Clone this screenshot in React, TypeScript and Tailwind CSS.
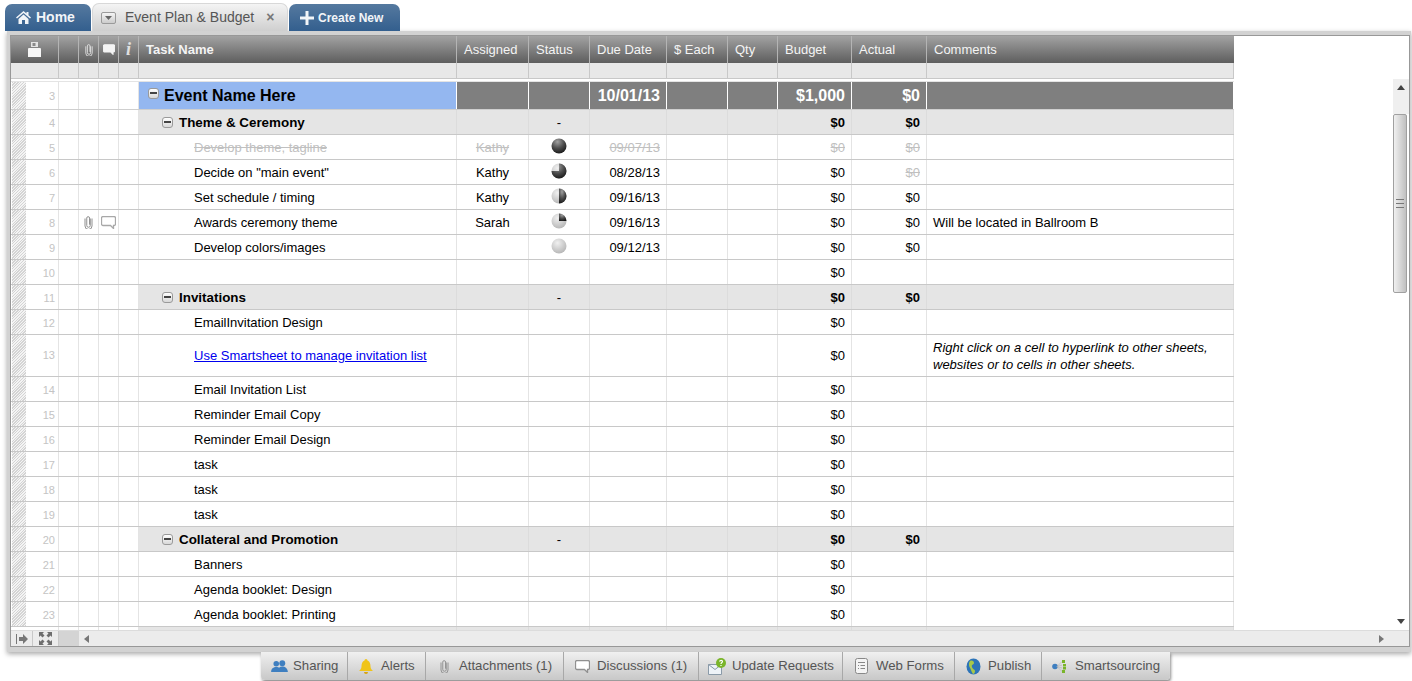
import React from "react";

const cols = "grid grid-cols-[48px_20px_20px_20px_20px_318px_72px_61px_77px_61px_50px_74px_75px_307px]";

const Clip = ({ c = "#8a8a8a", w = 9, h = 14 }: { c?: string; w?: number; h?: number }) => (
  <svg width={w} height={h} viewBox="0 0 10 16" fill="none">
    <path d="M7 4v8a2 2 0 0 1-4 0V3.5a1.6 1.6 0 0 1 3.200 0V11" stroke={c} strokeWidth="1.100" />
    <path d="M9 4v8.500a4 4 0 0 1-8 0V4" stroke={c} strokeWidth="1.100" />
  </svg>
);

const Bubble = ({ stroke = "#a8a8a8", fill = "#fff", w = 15, h = 13 }: { stroke?: string; fill?: string; w?: number; h?: number }) => (
  <svg width={w} height={h} viewBox="0 0 15 13">
    <path d="M2 .5h11a1.500 1.500 0 0 1 1.500 1.500v6a1.500 1.500 0 0 1-1.500 1.500h-.5V12.500L9.500 9.500H2A1.500 1.500 0 0 1 .5 8V2A1.500 1.500 0 0 1 2 .5z" fill={fill} stroke={stroke} strokeWidth="1.300" />
  </svg>
);

const Ball = ({ id, level }: { id: string; level: number }) => {
  const r = 7.5;
  let wedge = "";
  if (level === 3) wedge = "M8 8V.5A7.500 7.500 0 1 1 .5 8z";
  if (level === 2) wedge = "M8 .5A7.500 7.500 0 0 1 8 15.500z";
  if (level === 1) wedge = "M8 8V.5A7.500 7.500 0 0 1 15.500 8z";
  return (
    <svg width="16" height="16" viewBox="0 0 16 16">
      <defs>
        <radialGradient id={id + "l"} cx="40%" cy="30%" r="75%">
          <stop offset="0%" stopColor="#f0f0f0" />
          <stop offset="100%" stopColor="#b4b4b4" />
        </radialGradient>
        <radialGradient id={id + "d"} cx="40%" cy="22%" r="80%">
          <stop offset="0%" stopColor="#a0a0a0" />
          <stop offset="55%" stopColor="#4c4c4c" />
          <stop offset="100%" stopColor="#1a1a1a" />
        </radialGradient>
      </defs>
      <circle cx="8" cy="8" r={r} fill={level === 4 ? `url(#${id}d)` : `url(#${id}l)`} />
      {wedge && <path d={wedge} fill={`url(#${id}d)`} />}
    </svg>
  );
};

const Toggle = ({ cls = "" }: { cls?: string }) => (
  <span className={`flex h-[11px] w-[11px] shrink-0 items-center justify-center rounded-[3px] border border-[#9a9a9a] bg-gradient-to-b from-[#ffffff] to-[#d8d8d8] ${cls}`}>
    <span className="h-[2px] w-[7px] bg-[#444444]" />
  </span>
);

type R = {
  n: number;
  k: "top" | "group" | "task";
  name?: string;
  who?: string;
  ball?: number;
  dash?: boolean;
  date?: string;
  budget?: string;
  actual?: string;
  note?: string;
  done?: boolean;
  actualDone?: boolean;
  icons?: boolean;
  link?: boolean;
  tall?: boolean;
};

const rows: R[] = [
  { n: 3, k: "top", name: "Event Name Here", date: "10/01/13", budget: "$1,000", actual: "$0" },
  { n: 4, k: "group", name: "Theme & Ceremony", dash: true, budget: "$0", actual: "$0" },
  { n: 5, k: "task", name: "Develop theme, tagline", who: "Kathy", ball: 4, date: "09/07/13", budget: "$0", actual: "$0", done: true },
  { n: 6, k: "task", name: 'Decide on "main event"', who: "Kathy", ball: 3, date: "08/28/13", budget: "$0", actual: "$0", actualDone: true },
  { n: 7, k: "task", name: "Set schedule / timing", who: "Kathy", ball: 2, date: "09/16/13", budget: "$0", actual: "$0" },
  { n: 8, k: "task", name: "Awards ceremony theme", who: "Sarah", ball: 1, date: "09/16/13", budget: "$0", actual: "$0", note: "Will be located in Ballroom B", icons: true },
  { n: 9, k: "task", name: "Develop colors/images", ball: 0, date: "09/12/13", budget: "$0", actual: "$0" },
  { n: 10, k: "task", budget: "$0" },
  { n: 11, k: "group", name: "Invitations", dash: true, budget: "$0", actual: "$0" },
  { n: 12, k: "task", name: "EmailInvitation Design", budget: "$0" },
  { n: 13, k: "task", name: "Use Smartsheet to manage invitation list", budget: "$0", link: true, tall: true, note: "Right click on a cell to hyperlink to other sheets, websites or to cells in other sheets." },
  { n: 14, k: "task", name: "Email Invitation List", budget: "$0" },
  { n: 15, k: "task", name: "Reminder Email Copy", budget: "$0" },
  { n: 16, k: "task", name: "Reminder Email Design", budget: "$0" },
  { n: 17, k: "task", name: "task", budget: "$0" },
  { n: 18, k: "task", name: "task", budget: "$0" },
  { n: 19, k: "task", name: "task", budget: "$0" },
  { n: 20, k: "group", name: "Collateral and Promotion", dash: true, budget: "$0", actual: "$0" },
  { n: 21, k: "task", name: "Banners", budget: "$0" },
  { n: 22, k: "task", name: "Agenda booklet: Design", budget: "$0" },
  { n: 23, k: "task", name: "Agenda booklet: Printing", budget: "$0" },
];

const Hatch = ({ n, pad }: { n?: number; pad?: boolean }) => (
  <div className="flex h-full items-center justify-end border-r border-[#e4e4e4] pr-[3px] text-[11px] text-[#c4c4c4]">
    <span className="ml-[1px] mr-auto h-full w-[14px] bg-[repeating-linear-gradient(135deg,#d4d4d4_0px,#d4d4d4_1px,#f4f4f4_1px,#f4f4f4_2px)]" />
    <span className={pad ? "pt-[2px]" : ""}>{n}</span>
  </div>
);

const Row = ({ r }: { r: R }) => {
  const h = r.k === "top" ? "h-[28px]" : r.tall ? "h-[42px]" : "h-[25px]";
  const base = "h-full flex items-center border-r min-w-0";
  if (r.k === "top") {
    const c = `${base} border-[#ffffff] bg-[#7f7f7f] text-white font-bold text-[16px] justify-end pr-[6px]`;
    return (
      <div className={`${cols} ${h} items-stretch border-b border-[#cfcfcf]`}>
        <Hatch n={r.n} pad />
        <div className="border-r border-[#e4e4e4]" />
        <div className="border-r border-[#e4e4e4]" />
        <div className="border-r border-[#e4e4e4]" />
        <div className="border-r border-[#e4e4e4]" />
        <div className={`${base} gap-[5px] border-[#ffffff] bg-[#94b7f0] pl-[9px] text-[16px] font-bold text-black`}>
          <Toggle cls="-mt-[5px]" />
          {r.name}
        </div>
        <div className={c} />
        <div className={c} />
        <div className={c}>{r.date}</div>
        <div className={c} />
        <div className={c} />
        <div className={c}>{r.budget}</div>
        <div className={c}>{r.actual}</div>
        <div className={c} />
      </div>
    );
  }
  const group = r.k === "group";
  const muted = r.done ? "text-[#c0c0c0] line-through" : "text-black";
  const pad = r.tall ? "" : "pt-[2px]";
  const cell = `${base} ${pad} ${group ? "border-[#dcdcdc] bg-[#e5e5e5] font-bold" : "border-[#e4e4e4]"}`;
  return (
    <div className={`${cols} ${h} shrink-0 items-stretch border-b border-[#c8c8c8] text-[13px]`}>
      <Hatch n={r.n} pad={!r.tall} />
      <div className="border-r border-[#e4e4e4]" />
      <div className="flex items-center justify-center border-r border-[#e4e4e4]">{r.icons && <Clip />}</div>
      <div className="flex items-center justify-center border-r border-[#e4e4e4]">{r.icons && <Bubble />}</div>
      <div className="border-r border-[#e4e4e4]" />
      {group ? (
        <div className={`${cell} gap-[6px] pl-[23px]`}>
          <Toggle cls="-mt-[2px]" />
          <span className="whitespace-nowrap text-[13.4px]">{r.name}</span>
        </div>
      ) : (
        <div className={`${cell} pl-[55px] ${muted}`}>
          {r.link ? <span className="text-[#0000ee] underline">{r.name}</span> : r.name}
        </div>
      )}
      <div className={`${cell} justify-center ${muted}`}>{r.who}</div>
      <div className={`${cell} justify-center`}>
        {r.dash && <span className="font-normal">-</span>}
        {r.ball !== undefined && (
          <span className="-mt-[5px] flex">
            <Ball id={`b${r.n}`} level={r.ball} />
          </span>
        )}
      </div>
      <div className={`${cell} justify-end pr-[6px] ${muted}`}>{r.date}</div>
      <div className={cell} />
      <div className={cell} />
      <div className={`${cell} justify-end pr-[6px] ${muted}`}>{r.budget}</div>
      <div className={`${cell} justify-end pr-[6px] ${r.done || r.actualDone ? "text-[#c0c0c0] line-through" : ""}`}>{r.actual}</div>
      <div className={`${cell} pl-[6px] pr-[8px] ${r.tall ? "italic leading-[17px]" : ""}`}>
        <span>{r.note}</span>
      </div>
    </div>
  );
};

const PeekRow = () => (
  <div className={`${cols} h-[3px] shrink-0 items-stretch`}>
    <div className="border-r border-[#e4e4e4]" />
    <div className="border-r border-[#e4e4e4]" />
    <div className="border-r border-[#e4e4e4]" />
    <div className="border-r border-[#e4e4e4]" />
    <div className="border-r border-[#e4e4e4]" />
    {Array.from({ length: 9 }).map((_, i) => (
      <div key={i} className="border-r border-[#dcdcdc] bg-[#e5e5e5]" />
    ))}
  </div>
);

const HeadCell = ({ t, bold }: { t?: string; bold?: boolean }) => (
  <div className={`flex items-center border-r border-[#b4b4b4] pl-[7px] ${bold ? "font-bold" : ""}`}>{t}</div>
);

const IconHead = ({ children }: { children?: React.ReactNode }) => (
  <div className="flex items-center justify-center border-r border-[#b4b4b4]">{children}</div>
);

const Header = () => (
  <div className={`${cols} h-[27px] shrink-0 bg-gradient-to-b from-[#a3a3a3] to-[#5e5e5e] text-[13px] text-[#f4f4f4]`}>
    <IconHead>
      <svg width="13" height="15" viewBox="0 0 13 15">
        <path d="M3 0h7v5H3z" fill="#e4e4e4" />
        <path d="M4.500 1h3v3h-3z" fill="#8a8a8a" />
        <path d="M1 6h11a1 1 0 0 1 1 1v8H0V7a1 1 0 0 1 1-1z" fill="#f6f6f6" />
      </svg>
    </IconHead>
    <IconHead />
    <IconHead>
      <Clip c="#e4e4e4" w={8} h={13} />
    </IconHead>
    <IconHead>
      <Bubble stroke="#f4f4f4" fill="#f4f4f4" w={12} h={11} />
    </IconHead>
    <IconHead>
      <span className="font-['Liberation_Serif',serif] text-[18px] font-bold italic text-[#e0e0e0]">i</span>
    </IconHead>
    <HeadCell t="Task Name" bold />
    <HeadCell t="Assigned" />
    <HeadCell t="Status" />
    <HeadCell t="Due Date" />
    <HeadCell t="$ Each" />
    <HeadCell t="Qty" />
    <HeadCell t="Budget" />
    <HeadCell t="Actual" />
    <div className="flex items-center pl-[7px]">Comments</div>
  </div>
);

const Filter = () => (
  <div className={`${cols} h-[16px] shrink-0 border-b border-[#c8c8c8] bg-[#e8e8e8]`}>
    {Array.from({ length: 14 }).map((_, i) => (
      <div key={i} className="border-r border-[#c8c8c8]" />
    ))}
  </div>
);

const VScroll = () => (
  <div className="flex h-full w-[16px] shrink-0 flex-col bg-white">
    <div className="flex h-[35px] shrink-0 items-start justify-center bg-[#efefef] pt-[6px]">
      <svg width="8" height="6" viewBox="0 0 8 6">
        <path d="M4 0l4 5H0z" fill="#444444" />
      </svg>
    </div>
    <div className="mr-[2px] flex h-[179px] shrink-0 items-center justify-center rounded-[2px] border border-[#a0a0a0] bg-gradient-to-r from-[#f0f0f0] to-[#c0c0c0]">
      <div className="flex h-[9px] w-[8px] flex-col justify-between">
        <span className="h-[1px] bg-[#777777]" />
        <span className="h-[1px] bg-[#777777]" />
        <span className="h-[1px] bg-[#777777]" />
      </div>
    </div>
    <div className="flex-1" />
    <div className="flex h-[16px] shrink-0 items-center justify-center pb-[3px]">
      <svg width="8" height="6" viewBox="0 0 8 6">
        <path d="M4 6L8 1H0z" fill="#444444" />
      </svg>
    </div>
  </div>
);

const HScroll = () => (
  <div className="flex h-[16px] shrink-0 items-stretch border-t border-[#dcdcdc] bg-[#ececec]">
    <div className="flex w-[22px] items-center justify-center border-r border-[#c8c8c8]">
      <svg width="12" height="10" viewBox="0 0 12 10">
        <path d="M0 0h1v10H0zM3 3h4V0l5 5-5 5V7H3z" fill="#777777" />
      </svg>
    </div>
    <div className="flex w-[26px] items-center justify-center border-r border-[#c8c8c8]">
      <svg width="13" height="13" viewBox="0 0 13 13" fill="#6e6e6e">
        <path d="M0 0h5L3.500 1.500 5.500 3.500 3.500 5.500 1.500 3.500 0 5zM13 0v5L11.500 3.500 9.500 5.500 7.500 3.500 9.500 1.500 8 0zM0 13V8L1.500 9.500 3.500 7.500 5.500 9.500 3.500 11.500 5 13zM13 13H8L9.500 11.500 7.500 9.500 9.500 7.500 11.500 9.500 13 8z" />
      </svg>
    </div>
    <div className="w-[20px] bg-[#d4d4d4]" />
    <div className="flex flex-1 items-center justify-between pl-[5px] pr-[9px]">
      <svg width="5" height="8" viewBox="0 0 5 8">
        <path d="M0 4l5-4v8z" fill="#777777" />
      </svg>
      <svg width="5" height="8" viewBox="0 0 5 8">
        <path d="M5 4L0 0v8z" fill="#777777" />
      </svg>
    </div>
    <div className="w-[16px]" />
  </div>
);

const BTab = ({ w, children, t, gap = "gap-[4px]" }: { w: string; children: React.ReactNode; t: string; gap?: string }) => (
  <div className={`${w} flex items-center ${gap} border-r border-[#a8a8a8] pl-[7px] last:border-r-0`}>
    <span className="flex w-[22px] shrink-0 items-center justify-center">{children}</span>
    <span className="whitespace-nowrap">{t}</span>
  </div>
);

export default function App() {
  return (
    <div className="h-[681px] w-[1412px] overflow-hidden bg-white font-['Liberation_Sans',Arial,sans-serif] text-black">
      <div className="flex h-[31px] items-end pl-[5px]">
        <div className="flex h-[27px] w-[86px] items-center gap-[5px] rounded-t-[7px] bg-gradient-to-b from-[#55799f] to-[#335f8e] pl-[11px] text-[14px] font-bold text-[#f2f5f8]">
          <svg width="15" height="13" viewBox="0 0 15 13" fill="#f2f5f8">
            <path d="M7.500 0L0 6.500 1 7.500 7.500 2 14 7.500 15 6.500 12.500 4.300V1h-2v1.600zM2.500 8v5h3.500V9h3v4h3.500V8L7.500 3.500z" />
          </svg>
          Home
        </div>
        <div className="ml-[1px] flex h-[28px] w-[196px] items-center rounded-t-[7px] border border-b-0 border-[#d8d8d8] bg-gradient-to-b from-[#f4f4f4] to-[#cfcfcf] pl-[8px] text-[14px] text-[#555555]">
          <span className="flex h-[12px] w-[15px] items-center justify-center rounded-[2px] border border-[#9a9a9a] bg-gradient-to-b from-[#f4f4f4] to-[#cccccc]">
            <svg width="7" height="4" viewBox="0 0 7 4">
              <path d="M0 0h7L3.500 4z" fill="#666666" />
            </svg>
          </span>
          <span className="ml-[9px] whitespace-nowrap">Event Plan &amp; Budget</span>
          <span className="ml-[12px] text-[14px] font-bold text-[#777777]">×</span>
        </div>
        <div className="ml-[1px] flex h-[27px] w-[111px] items-center gap-[4px] rounded-t-[7px] bg-gradient-to-b from-[#55799f] to-[#335f8e] pl-[11px] text-[12px] font-bold text-[#f2f5f8]">
          <svg width="14" height="14" viewBox="0 0 14 14" fill="#f2f5f8">
            <path d="M5.500 0h3v5.500H14v3H8.500V14h-3V8.500H0v-3h5.500z" />
          </svg>
          Create New
        </div>
      </div>
      <div className="ml-[7px] h-[621px] w-[1404px] bg-[#d2d2d2] pb-[5px] pl-[3px] pr-[1px] pt-[4px] shadow-[0_2px_5px_rgba(0,0,0,0.35)]">
        <div className="flex h-full flex-col border border-[#989898] bg-white">
          <div className="flex min-h-0 flex-1">
            <div className="flex w-[1223px] shrink-0 flex-col overflow-hidden">
              <Header />
              <Filter />
              <div className="h-[3px] shrink-0 border-b border-[#e4e4e4]" />
              {rows.map((r) => (
                <Row key={r.n} r={r} />
              ))}
              <PeekRow />
            </div>
            <div className="flex flex-1 flex-col items-end">
              <div className="h-[43px] shrink-0" />
              <div className="min-h-0 flex-1">
                <VScroll />
              </div>
            </div>
          </div>
          <HScroll />
        </div>
      </div>
      <div className="relative ml-[261px] flex h-[28px] w-[909px] rounded-b-[4px] bg-gradient-to-b from-[#f0f0f0] to-[#c8c8c8] text-[13.2px] text-[#555555] shadow-[1px_2px_3px_rgba(0,0,0,0.45)]">
        <BTab w="w-[87px]" t="Sharing" gap="gap-[3px]">
          <svg width="17" height="13" viewBox="0 0 18 14" fill="#3f7fc0">
            <circle cx="5.500" cy="4" r="3" />
            <circle cx="12" cy="3.500" r="3.200" />
            <path d="M0 13c0-4 2.500-5.500 5.500-5.500S11 9 11 13zM7 13c0-4 2-6 5-6s6 2 6 6z" />
          </svg>
        </BTab>
        <BTab w="w-[78px]" t="Alerts">
          <svg width="16" height="15" viewBox="0 0 16 15" fill="#f0c419">
            <path d="M8 0a1.500 1.500 0 0 1 1.500 1.500C12 2.500 12.500 5 12.500 7.500c0 2 1.500 3.500 2.500 4.500H1c1-1 2.500-2.500 2.500-4.500C3.500 5 4 2.500 6.500 1.500A1.500 1.500 0 0 1 8 0z" />
            <path d="M6 13h4a2 2 0 0 1-4 0z" fill="#d9a30f" />
          </svg>
        </BTab>
        <BTab w="w-[138px]" t="Attachments (1)">
          <Clip c="#909090" />
        </BTab>
        <BTab w="w-[135px]" t="Discussions (1)">
          <Bubble stroke="#909090" />
        </BTab>
        <BTab w="w-[144px]" t="Update Requests">
          <svg width="19" height="17" viewBox="0 0 19 17">
            <path d="M.5 6.500h13v10H.5z" fill="#eef3f8" stroke="#8a9aa8" />
            <path d="M.5 6.500l6.500 5 6.500-5" fill="none" stroke="#8a9aa8" />
            <circle cx="13" cy="5" r="5" fill="#7ab52a" />
            <path d="M11.500 3.500c.5-1.500 3-1.500 3 0 0 1-1.500 1-1.500 2.500M13 7v1" fill="none" stroke="#fff" strokeWidth="1.200" />
          </svg>
        </BTab>
        <BTab w="w-[112px]" t="Web Forms">
          <svg width="13" height="16" viewBox="0 0 13 16" fill="none" stroke="#888888">
            <rect x=".5" y=".5" width="12" height="15" rx="2" fill="#f4f4f4" />
            <path d="M3 4.500h7M3 7.500h1M5.500 7.500H10M3 10.500h1M5.500 10.500H10" />
          </svg>
        </BTab>
        <BTab w="w-[87px]" t="Publish">
          <svg width="15" height="17" viewBox="0 0 15 17">
            <ellipse cx="7.500" cy="8.500" rx="7" ry="8" fill="#2d74b8" />
            <path d="M4 3c2-1 4 0 4 2s-3 1-2 4 3 2 3 4-1 3-2 3C5 13 5 11 3.500 9 2.500 7 3 4 4 3z" fill="#a8c84a" />
          </svg>
        </BTab>
        <BTab w="w-[128px]" t="Smartsourcing">
          <svg width="16" height="13" viewBox="0 0 16 13">
            <circle cx="3" cy="6.500" r="2.800" fill="#3f7fc0" />
            <path d="M5 6.500L10 1.500M5 6.500L10 5M5 6.500L10 8M5 6.500L10 11.500" stroke="#b8b8b8" strokeWidth=".7" />
            <rect x="10" y="0" width="3" height="3" fill="#7ab52a" />
            <rect x="11" y="4" width="3" height="2.500" fill="#7ab52a" />
            <rect x="11" y="7" width="3" height="2.500" fill="#7ab52a" />
            <rect x="10" y="10" width="3" height="3" fill="#7ab52a" />
          </svg>
        </BTab>
      </div>
    </div>
  );
}
